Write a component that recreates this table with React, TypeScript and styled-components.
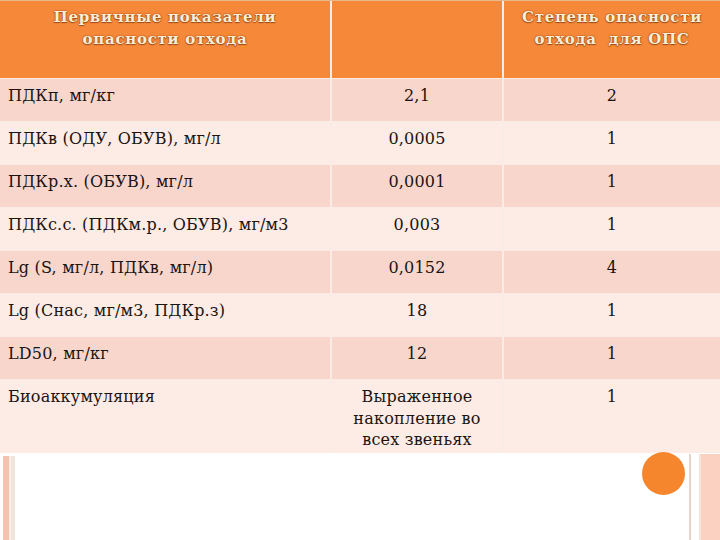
import React from 'react';
import styled, { createGlobalStyle } from 'styled-components';

const GlobalStyle = createGlobalStyle`
    html, body {
        margin: 0;
        padding: 0;
        background: #ffffff;
        width: 720px;
        height: 540px;
        overflow: hidden;
    }
`;

const Page = styled.div`
    width: 720px;
    height: 540px;
    display: flex;
    flex-direction: column;
    font-family: "DejaVu Serif", "Liberation Serif", serif;
`;

const Table = styled.div`
    display: grid;
    grid-template-columns: 330px 170px 1fr;
    border-top: 1px solid #e9b98a;
    column-gap: 2px;
    row-gap: 1px;
    background: #f8ece4;
`;

const HeadCell = styled.div`
    background: #f6883a;
    height: 77px;
    padding: 5px 2px 0;
    box-sizing: border-box;
    text-align: center;
    font-weight: bold;
    font-size: 15px;
    line-height: 22px;
    color: #f9eed8;
    letter-spacing: 0.7px;
    text-shadow: 0 1px 1px #9c4c16, 0 0 1px #8a4414, 0 0 2px #b4591c;
`;

const Cell = styled.div<{ $dark: boolean; $center?: boolean; $tall?: boolean }>`
    background: ${p => (p.$dark ? '#f9d6cc' : '#fdebe5')};
    height: ${p => (p.$tall ? '73px' : '42px')};
    box-sizing: border-box;
    padding: ${p => (p.$center ? '6px 2px 0' : '6px 8px 0')};
    text-align: ${p => (p.$center ? 'center' : 'left')};
    font-size: 16px;
    line-height: 21.5px;
    letter-spacing: 0.2px;
    color: #1a1412;
`;

const Decor = styled.div`
    flex: 1;
    display: flex;
    align-items: stretch;
`;

const LeftStrip = styled.div`
    width: 6px;
    margin-left: 3px;
    margin-top: 3px;
    background: #f4c2ae;
    border-right: 2px solid #fdf0ea;
    box-shadow: 4px 0 0 #f1e4dd;
    margin-right: 6px;
`;

const Gap = styled.div`
    flex: 1;
`;

const Dot = styled.div`
    width: 43px;
    height: 43px;
    border-radius: 50%;
    background: #f5862d;
    margin-top: -1px;
    margin-right: 4px;
`;

const RightBand = styled.div`
    width: 29px;
    margin-top: 1px;
    border-left: 2px solid #e9d4c9;
    background: linear-gradient(to right, #ffffff 0 8px, #f6e2d9 8px 10px, #fbd1c1 10px);
`;

const rows: [string, string, string][] = [
    ['ПДКп, мг/кг', '2,1', '2'],
    ['ПДКв (ОДУ, ОБУВ), мг/л', '0,0005', '1'],
    ['ПДКр.х. (ОБУВ), мг/л', '0,0001', '1'],
    ['ПДКс.с. (ПДКм.р., ОБУВ), мг/м3', '0,003', '1'],
    ['Lg (S, мг/л, ПДКв, мг/л)', '0,0152', '4'],
    ['Lg (Снас, мг/м3, ПДКр.з)', '18', '1'],
    ['LD50, мг/кг', '12', '1'],
];

const App: React.FC = () => {
    return (
        <Page>
            <GlobalStyle />
            <Table>
                <HeadCell>Первичные показатели<br />опасности отхода</HeadCell>
                <HeadCell />
                <HeadCell>Степень опасности<br />отхода&nbsp; для ОПС</HeadCell>
                {rows.map((r, i) => (
                    <React.Fragment key={i}>
                        <Cell $dark={i % 2 === 0}>{r[0]}</Cell>
                        <Cell $dark={i % 2 === 0} $center>{r[1]}</Cell>
                        <Cell $dark={i % 2 === 0} $center>{r[2]}</Cell>
                    </React.Fragment>
                ))}
                <Cell $dark={false} $tall>Биоаккумуляция</Cell>
                <Cell $dark={false} $tall $center>Выраженное<br />накопление во<br />всех звеньях</Cell>
                <Cell $dark={false} $tall $center>1</Cell>
            </Table>
            <Decor>
                <LeftStrip />
                <Gap />
                <Dot />
                <RightBand />
            </Decor>
        </Page>
    );
};

export default App;
